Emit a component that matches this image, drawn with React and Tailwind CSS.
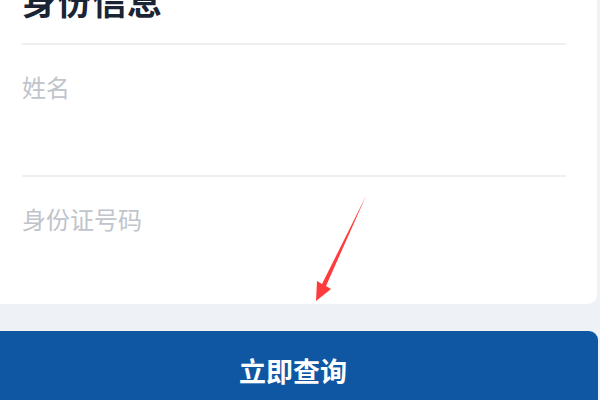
const fields = ["姓名", "身份证号码"];

const Arrow = () => (
  <svg className="absolute left-0 top-0" width="600" height="400" viewBox="0 0 600 400">
    <polygon points="366,196 326,286 331,289 316,301 317,281 322,284" fill="#ff3b3b" />
  </svg>
);

export default function App() {
  return (
    <div className="relative w-[600px] h-[400px] overflow-hidden bg-[#eef1f5] font-['Noto_Sans_CJK_SC','Noto_Sans',sans-serif]">
      <div className="w-[597px] h-[304px] bg-white rounded-br-[9px] px-[22px] overflow-hidden">
        <h1 className="-mt-[18px] text-[35px] leading-none font-bold text-[#1b2434]">身份信息</h1>
        <div className="mt-[26px] w-[544px] border-t-2 border-[#efefef]" />
        {fields.map((f, i) => (
          <div key={f} className="w-[544px]">
            <div className="h-[130px] pt-[30px]">
              <p className="text-[24px] leading-none text-[#c0c4cb]">{f}</p>
            </div>
            {i === 0 && <div className="border-t-2 border-[#efefef]" />}
          </div>
        ))}
      </div>
      <button className="mt-[27px] w-[598px] h-[80px] bg-[#0f57a3] rounded-tr-[9px] flex justify-center pt-[26px] pr-[12px]">
        <span className="text-[27px] leading-none font-bold text-white">立即查询</span>
      </button>
      <Arrow />
    </div>
  );
}
